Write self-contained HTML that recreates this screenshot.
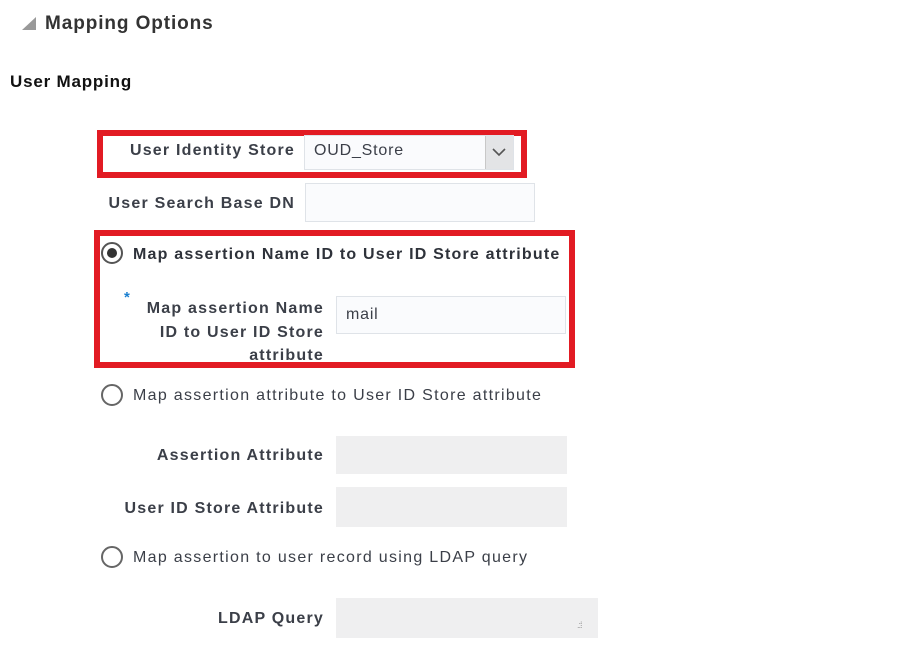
<!DOCTYPE html>
<html><head><meta charset="utf-8"><style>
*{margin:0;padding:0;box-sizing:border-box}
body{width:900px;height:652px;background:#fff;position:relative;overflow:hidden;font-family:"Liberation Sans",sans-serif;color:#3b3f48}
.a{position:absolute;white-space:nowrap}
.lbl{font-weight:bold;font-size:16px;letter-spacing:1.2px}
.r{text-align:right}
.red{position:absolute;border:6px solid #e21b23}
.in{position:absolute;border:1px solid #dfe3e8;background:#fafbfd}
.dis{position:absolute;background:#efeff0}
.rad{position:absolute;width:22px;height:22px;border:2px solid #666;border-radius:50%;background:#fff}
.reg{font-size:16px;letter-spacing:1.3px}
</style></head><body>
<div class="a" style="left:22px;top:17px;width:0;height:0;border-left:14px solid transparent;border-bottom:13px solid #999"></div>
<div class="a" style="left:45px;top:13px;font-size:19px;font-weight:bold;color:#333;letter-spacing:0.9px">Mapping Options</div>
<div class="a" style="left:10px;top:72px;font-size:17px;font-weight:bold;color:#111;letter-spacing:0.8px">User Mapping</div>

<div class="red" style="left:97px;top:130px;width:430px;height:48px"></div>
<div class="a lbl r" style="left:100px;width:195px;top:142px">User Identity Store</div>
<div class="in" style="left:304px;top:135px;width:210px;height:35px"></div>
<div class="a" style="left:314px;top:142px;font-size:16px;letter-spacing:0.8px">OUD_Store</div>
<div class="a" style="left:485px;top:136px;width:28px;height:33px;background:#e3e4e6;border-left:1px solid #c8c8c8"></div>
<svg class="a" style="left:491px;top:146px" width="16" height="12"><path d="M2 3 L8 9 L14 3" fill="none" stroke="#555" stroke-width="1.6"/></svg>

<div class="a lbl r" style="left:60px;width:235px;top:195px">User Search Base DN</div>
<div class="in" style="left:305px;top:183px;width:230px;height:39px"></div>

<div class="red" style="left:94px;top:230px;width:481px;height:138px"></div>
<div class="rad" style="left:101px;top:242px;border-color:#555"></div>
<div class="a" style="left:107px;top:248px;width:10px;height:10px;border-radius:50%;background:#333"></div>
<div class="a lbl" style="left:133px;top:246px;color:#2e323a">Map assertion Name ID to User ID Store attribute</div>
<div class="a" style="left:124px;top:289px;color:#1a7fd0;font-size:15px;font-weight:bold">*</div>
<div class="a lbl r" style="left:100px;width:224px;top:297px;line-height:23.5px">Map assertion Name<br>ID to User ID Store<br>attribute</div>
<div class="in" style="left:336px;top:296px;width:230px;height:38px"></div>
<div class="a" style="left:346px;top:306px;font-size:16px;letter-spacing:0.8px">mail</div>

<div class="rad" style="left:101px;top:384px"></div>
<div class="a reg" style="left:133px;top:387px">Map assertion attribute to User ID Store attribute</div>
<div class="a lbl r" style="left:60px;width:264px;top:447px">Assertion Attribute</div>
<div class="dis" style="left:336px;top:436px;width:231px;height:38px"></div>
<div class="a lbl r" style="left:60px;width:264px;top:500px">User ID Store Attribute</div>
<div class="dis" style="left:336px;top:487px;width:231px;height:40px"></div>

<div class="rad" style="left:101px;top:546px"></div>
<div class="a reg" style="left:133px;top:549px">Map assertion to user record using LDAP query</div>
<div class="a lbl r" style="left:60px;width:264px;top:610px">LDAP Query</div>
<div class="dis" style="left:336px;top:598px;width:262px;height:40px"></div>
<div class="a" style="left:577px;top:620px;font-size:9px;color:#999;letter-spacing:-1px">.:⁞</div>
</body></html>
